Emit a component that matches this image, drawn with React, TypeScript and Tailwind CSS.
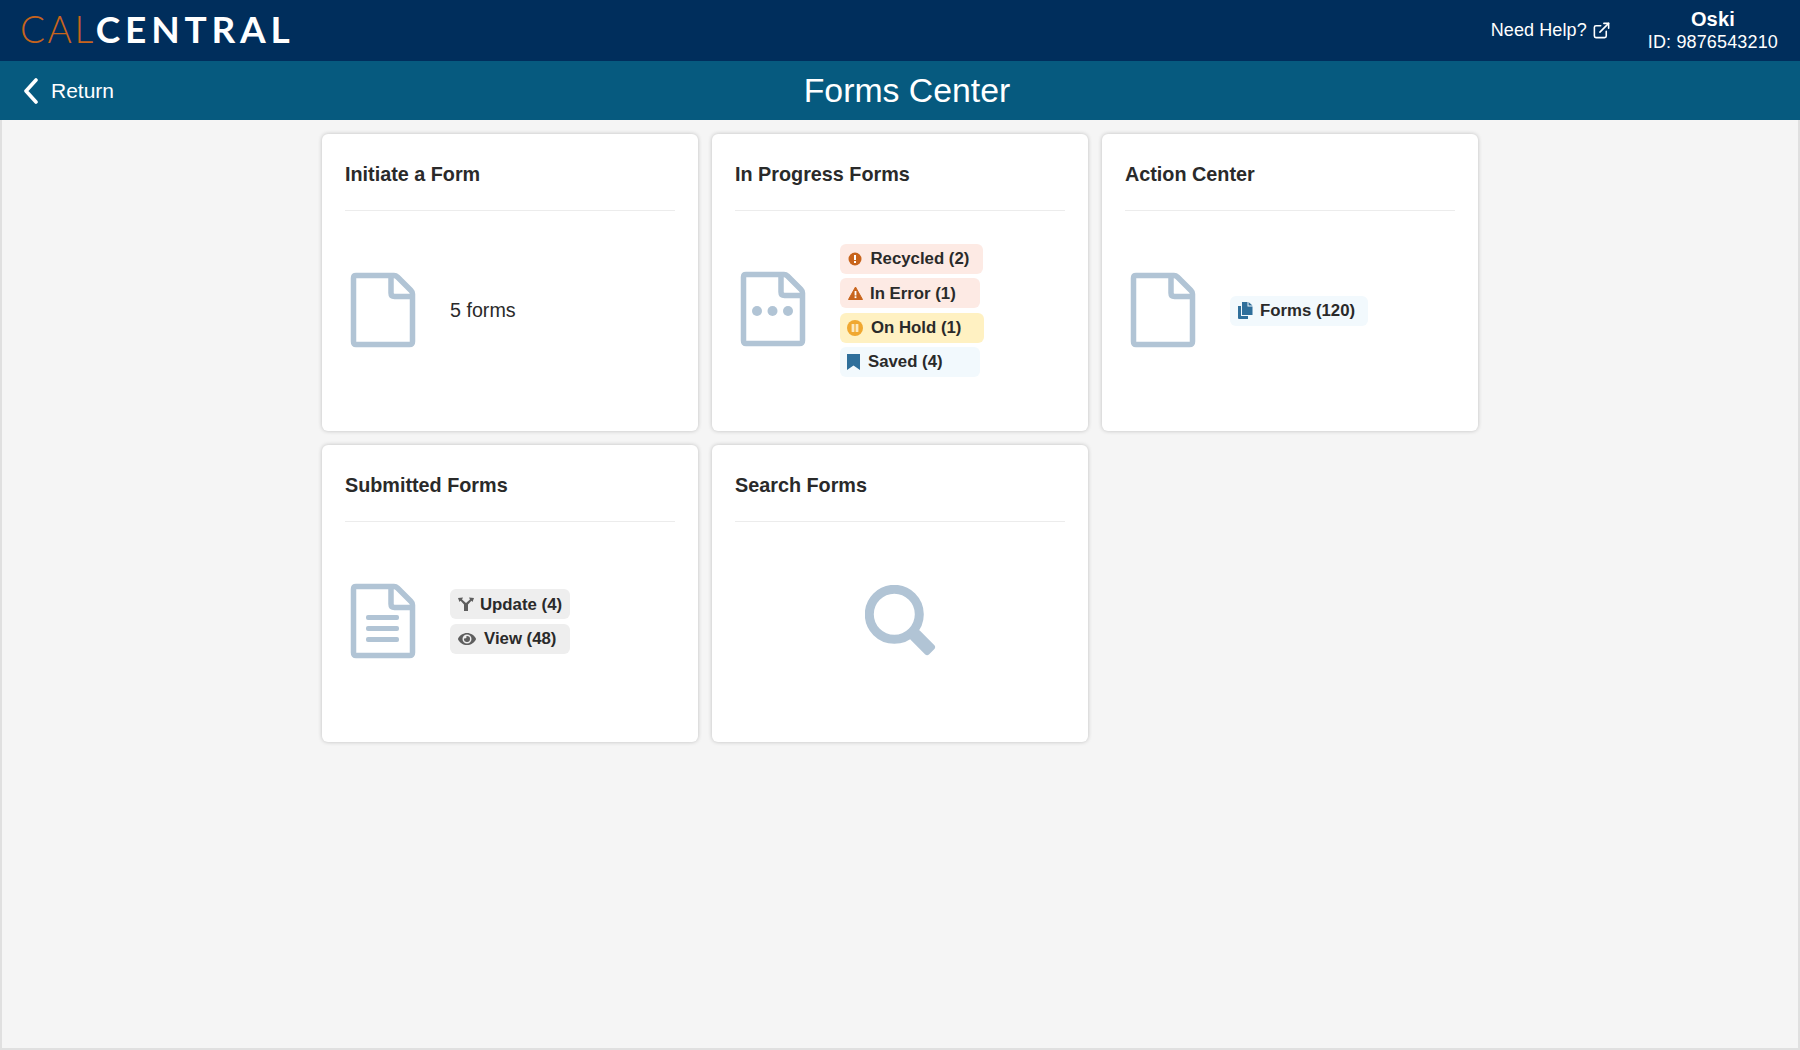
import React from 'react';
import { FaEye } from 'react-icons/fa';
import { ExternalLink } from 'lucide-react';

const FONT = "font-['Liberation_Sans',Arial,sans-serif]";

const DocIcon: React.FC<{ children?: React.ReactNode }> = ({ children }) => (
  <svg width="66" height="76" viewBox="0 0 66 76" className="mb-[2px] shrink-0">
    <path
      d="M6 3.5 H44 Q46 3.5 47.5 5 L61 18.5 Q62.5 20 62.5 22 V69.5 Q62.5 72.5 59.5 72.5 H6 Q3.5 72.5 3.5 69.5 V6 Q3.5 3.5 6 3.5 Z"
      fill="none"
      stroke="#b1c4d5"
      strokeWidth="5.5"
      strokeLinejoin="round"
    />
    <path d="M41 3.5 V21 Q41 24.5 44.5 24.5 H62.5" fill="none" stroke="#b1c4d5" strokeWidth="5.5" strokeLinejoin="round" />
    {children}
  </svg>
);

const Badge: React.FC<{ bg: string; gap: string; icon: React.ReactNode; label: string; width: string }> = ({
  bg,
  gap,
  icon,
  label,
  width,
}) => (
  <div className={`flex h-[30px] items-center rounded-md pl-2 text-[16.8px] font-bold text-[#2a2a2a] ${bg} ${gap} ${width}`}>
    {icon}
    <span>{label}</span>
  </div>
);

const Card: React.FC<{ title: string; children: React.ReactNode }> = ({ title, children }) => (
  <div className="flex h-[297px] flex-col rounded-md bg-white px-[23px] shadow-[0_0_4px_rgba(0,0,0,0.22)]">
    <div className="flex h-[77px] shrink-0 items-center border-b border-[#ececec] pt-[5px] text-[19.8px] font-bold text-[#2a2a2a]">
      {title}
    </div>
    <div className="flex flex-1 items-center pb-[21px]">{children}</div>
  </div>
);

const App: React.FC = () => {
  return (
    <div className={`flex h-[1050px] flex-col bg-[#f5f5f5] ${FONT}`}>
      <header className="flex h-[61px] shrink-0 items-center justify-between bg-[#002e5c] pl-[20px] pr-[22px] text-white">
        <div className="mb-[5px] flex items-center text-[37px] leading-none tracking-[0.13em]">
          <span className="font-['Lato',sans-serif] font-light tracking-[0.07em] text-[#c8641c]">CAL</span>
          <span className="font-['Lato',sans-serif] font-bold">CENTRAL</span>
        </div>
        <div className="flex items-center gap-[37px]">
          <div className="flex items-center gap-[5px] text-[18px] tracking-[0.1px]">
            Need Help?
            <ExternalLink size={19} strokeWidth={2} />
          </div>
          <div className="flex flex-col items-center text-[18px] leading-[23px] tracking-[0.15px]">
            <span className="text-[20px] font-bold">Oski</span>
            <span>ID: 9876543210</span>
          </div>
        </div>
      </header>
      <div className="relative flex h-[59px] shrink-0 items-center justify-center bg-[#065a7f] text-white">
        <div className="absolute left-[23px] top-0 flex h-full items-center gap-[12px] text-[21px]">
          <svg width="16" height="26" viewBox="0 0 16 26" fill="none" stroke="white" strokeWidth="3.6" strokeLinecap="round" strokeLinejoin="round">
            <path d="M13 2 L3 13 L13 24" />
          </svg>
          Return
        </div>
        <h1 className="ml-[14px] text-[33.8px] font-normal">Forms Center</h1>
      </div>
      <main className="grid flex-1 grid-cols-[376px_376px_376px] content-start justify-start gap-[14px] border-x-2 border-b-2 border-[#e0e0e0] pl-[320px] pt-[14px]">
        <Card title="Initiate a Form">
          <div className="flex items-center">
            <div className="ml-[5px]">
              <DocIcon />
            </div>
            <span className="ml-[34px] mt-[1px] text-[19.7px] text-[#2a2a2a]">5 forms</span>
          </div>
        </Card>
        <Card title="In Progress Forms">
          <div className="flex items-center">
            <div className="ml-[5px]">
              <DocIcon>
                <circle cx="17" cy="40" r="5" fill="#b1c4d5" />
                <circle cx="32.5" cy="40" r="5" fill="#b1c4d5" />
                <circle cx="48" cy="40" r="5" fill="#b1c4d5" />
              </DocIcon>
            </div>
            <div className="ml-[34px] flex flex-col gap-[4.4px]">
              <Badge
                bg="bg-[#fdeae4]"
                gap="gap-[8.5px]"
                width="w-[143px]"
                label="Recycled (2)"
                icon={
                  <svg width="14" height="14" viewBox="0 0 14 14" className="shrink-0">
                    <circle cx="7" cy="7" r="6.5" fill="#c8641c" />
                    <rect x="6" y="3" width="2" height="5" fill="white" />
                    <rect x="6" y="9" width="2" height="2" fill="white" />
                  </svg>
                }
              />
              <Badge
                bg="bg-[#fdeae4]"
                gap="gap-[7px]"
                width="w-[140px]"
                label="In Error (1)"
                icon={
                  <svg width="15" height="14" viewBox="0 0 15 14" className="shrink-0">
                    <path d="M7.5 1 L14.5 13.5 H0.5 Z" fill="#c8641c" stroke="#c8641c" strokeLinejoin="round" />
                    <rect x="6.6" y="5" width="1.8" height="4.5" fill="white" />
                    <rect x="6.6" y="10.3" width="1.8" height="1.8" fill="white" />
                  </svg>
                }
              />
              <Badge
                bg="bg-[#fff1c2]"
                gap="gap-[8px]"
                width="w-[144px]"
                label="On Hold (1)"
                icon={
                  <svg width="16" height="16" viewBox="0 0 16 16" className="-ml-[1px] shrink-0">
                    <circle cx="8" cy="8" r="8" fill="#f0a830" />
                    <rect x="4.6" y="4" width="2.8" height="8" rx="0.6" fill="#fde9bd" />
                    <rect x="8.6" y="4" width="2.8" height="8" rx="0.6" fill="#fde9bd" />
                  </svg>
                }
              />
              <Badge
                bg="bg-[#f2f9fd]"
                gap="gap-[8px]"
                width="w-[140px]"
                label="Saved (4)"
                icon={
                  <svg width="13" height="16" viewBox="0 0 13 16" className="-ml-[1px] shrink-0">
                    <path d="M0 0 H13 V16 L6.5 11.5 L0 16 Z" fill="#2f6f9b" />
                  </svg>
                }
              />
            </div>
          </div>
        </Card>
        <Card title="Action Center">
          <div className="flex items-center">
            <div className="ml-[5px]">
              <DocIcon />
            </div>
            <div className="ml-[34px]">
              <Badge
                bg="bg-[#f2f9fd]"
                gap="gap-[7px]"
                width="w-[138px]"
                label="Forms (120)"
                icon={
                  <svg width="15" height="17" viewBox="0 0 15 17" className="shrink-0">
                    <path d="M0 4 H3 V14 H10 V17 H1 Q0 17 0 16 Z" fill="#2f6f9b" />
                    <path d="M4 0 H9.5 V4.5 H14.5 V13 H4 Z" fill="#2f6f9b" />
                    <path d="M10.5 0 L14.5 3.5 H10.5 Z" fill="#2f6f9b" />
                  </svg>
                }
              />
            </div>
          </div>
        </Card>
        <Card title="Submitted Forms">
          <div className="flex items-center">
            <div className="ml-[5px]">
              <DocIcon>
                <rect x="16" y="32" width="33" height="5" rx="2" fill="#b1c4d5" />
                <rect x="16" y="43" width="33" height="5" rx="2" fill="#b1c4d5" />
                <rect x="16" y="54" width="33" height="5" rx="2" fill="#b1c4d5" />
              </DocIcon>
            </div>
            <div className="ml-[34px] flex flex-col gap-[4.4px]">
              <Badge
                bg="bg-[#eeeeee]"
                gap="gap-[6px]"
                width="w-[120px]"
                label="Update (4)"
                icon={
                  <svg width="16" height="14" viewBox="0 0 16 14" className="shrink-0" fill="#5e5e5e">
                    <path d="M0 1 L5 0.5 L4 2.5 L8 6 L12 2.5 L11 0.5 L16 1 L14.5 5 L13.4 3.7 L10 7.5 V14 H6 V7.5 L2.6 3.7 L1.5 5 Z" />
                  </svg>
                }
              />
              <Badge
                bg="bg-[#eeeeee]"
                gap="gap-[8px]"
                width="w-[120px]"
                label="View (48)"
                icon={<FaEye size={18} color="#5e5e5e" className="shrink-0" />}
              />
            </div>
          </div>
        </Card>
        <Card title="Search Forms">
          <div className="flex w-full items-center justify-center">
            <svg width="72" height="72" viewBox="0 0 72 72" className="mb-[1px] ml-[1px]">
              <circle cx="29.3" cy="29.3" r="25" fill="none" stroke="#b1c4d5" strokeWidth="9" />
              <rect x="-13" y="-6.5" width="26" height="13" rx="3" fill="#b1c4d5" transform="translate(57.5 57.5) rotate(45)" />
            </svg>
          </div>
        </Card>
      </main>
    </div>
  );
};

export default App;
